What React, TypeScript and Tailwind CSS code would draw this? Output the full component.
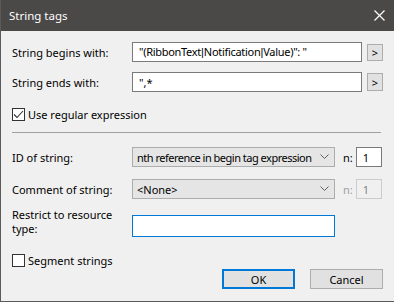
import React from "react";

const font = { fontFamily: '"Noto Sans", "Segoe UI", "Liberation Sans", sans-serif' };

function Chevron({ color = "#606060" }: { color?: string }) {
  return (
    <svg width="9" height="6" viewBox="0 0 9 6" className="block shrink-0">
      <path d="M0.5 0.5 L4.5 4.5 L8.5 0.5" fill="none" stroke={color} strokeWidth="1" />
    </svg>
  );
}

function Pipe() {
  return <span className="font-['Liberation_Sans'] tracking-normal">|</span>;
}

export default function App() {
  return (
    <div
      className="w-[394px] h-[302px] bg-[#f0f0f0] border-l border-b border-[#5a5a5a] flex flex-col text-[11px] text-black leading-none overflow-hidden"
      style={font}
    >
      {/* Title bar */}
      <div className="h-[31px] bg-[#4a4948] flex items-center justify-between pl-[8px] pr-[9px] shrink-0">
        <span className="text-white text-[11.5px]">String tags</span>
        <svg width="11" height="11" viewBox="0 0 11 11">
          <path d="M0.5 0.5 L10.5 10.5 M10.5 0.5 L0.5 10.5" stroke="#ffffff" strokeWidth="1.2" />
        </svg>
      </div>

      <div className="pl-[11px] flex flex-col">
        {/* Row 1 */}
        <div className="flex items-center mt-[11px] h-[20px]">
          <div className="w-[120px]">String begins with:</div>
          <div className="w-[230px] h-[20px] bg-white border border-[#7a7a7a] flex items-center px-[6px] whitespace-nowrap tracking-[-0.3px]">
            <span>
              "(RibbonText<Pipe />Notification<Pipe />Value)": "
            </span>
          </div>
          <div className="ml-[5px] w-[16px] h-[17px] bg-[#e1e1e1] border border-[#adadad] flex items-center justify-center">
            &gt;
          </div>
        </div>

        {/* Row 2 */}
        <div className="flex items-center mt-[10px] h-[20px]">
          <div className="w-[120px]">String ends with:</div>
          <div className="w-[230px] h-[20px] bg-white border border-[#7a7a7a] flex items-center px-[6px]">
            ",*
          </div>
          <div className="ml-[5px] w-[16px] h-[18px] bg-[#e1e1e1] border border-[#adadad] flex items-center justify-center">
            &gt;
          </div>
        </div>

        {/* Checkbox */}
        <div className="flex items-center mt-[16px] h-[13px]">
          <div className="w-[13px] h-[13px] border border-[#333333] bg-white flex items-center justify-center">
            <svg width="11" height="9" viewBox="0 0 11 9">
              <path d="M1 4.5 L4 7.5 L10 1" fill="none" stroke="#333333" strokeWidth="1.1" />
            </svg>
          </div>
          <span className="ml-[3px]">Use regular expression</span>
        </div>

        {/* Separator */}
        <div className="mt-[11px] w-[369px] h-px bg-[#a0a0a0]" />

        {/* ID of string */}
        <div className="flex items-center mt-[14px] h-[20px]">
          <div className="w-[120px]">ID of string:</div>
          <div className="w-[203px] h-[20px] bg-[#e5e5e5] border border-[#adadad] flex items-center justify-between pl-[4px] pr-[5px] whitespace-nowrap">
            <span className="tracking-[-0.5px]">nth reference in begin tag expression</span>
            <Chevron />
          </div>
          <span className="ml-[8px]">n:</span>
          <div className="ml-[3px] w-[26px] h-[20px] bg-white border border-[#7a7a7a] flex items-center px-[6px]">
            1
          </div>
        </div>

        {/* Comment of string */}
        <div className="flex items-center mt-[12px] h-[20px]">
          <div className="w-[120px]">Comment of string:</div>
          <div className="w-[203px] h-[20px] bg-[#e5e5e5] border border-[#adadad] flex items-center justify-between pl-[4px] pr-[5px]">
            <span>&lt;None&gt;</span>
            <Chevron />
          </div>
          <span className="ml-[8px] text-[#a0a0a0]">n:</span>
          <div className="ml-[3px] w-[26px] h-[20px] bg-[#f0f0f0] border border-[#cccccc] flex items-center px-[6px] text-[#838383]">
            1
          </div>
        </div>

        {/* Restrict */}
        <div className="flex items-start mt-[16px] h-[22px]">
          <div className="w-[120px] leading-[14px] -mt-[7px]">
            Restrict to resource
            <br />
            type:
          </div>
          <div className="w-[203px] h-[22px] bg-white border border-[#0078d7]" />
        </div>

        {/* Segment + buttons */}
        <div className="flex mt-[17px]">
          <div className="flex items-start">
            <div className="w-[13px] h-[13px] border border-[#333333] bg-white" />
            <span className="ml-[3px] leading-[13px]">Segment strings</span>
          </div>
          <div className="ml-auto mr-[11px] flex gap-[15px] mt-[15px]">
            <div className="w-[73px] h-[20px] bg-[#e1e1e1] border-2 border-[#0078d7] flex items-center justify-center">
              OK
            </div>
            <div className="w-[73px] h-[20px] bg-[#e1e1e1] border border-[#adadad] flex items-center justify-center">
              Cancel
            </div>
          </div>
        </div>
      </div>
    </div>
  );
}
